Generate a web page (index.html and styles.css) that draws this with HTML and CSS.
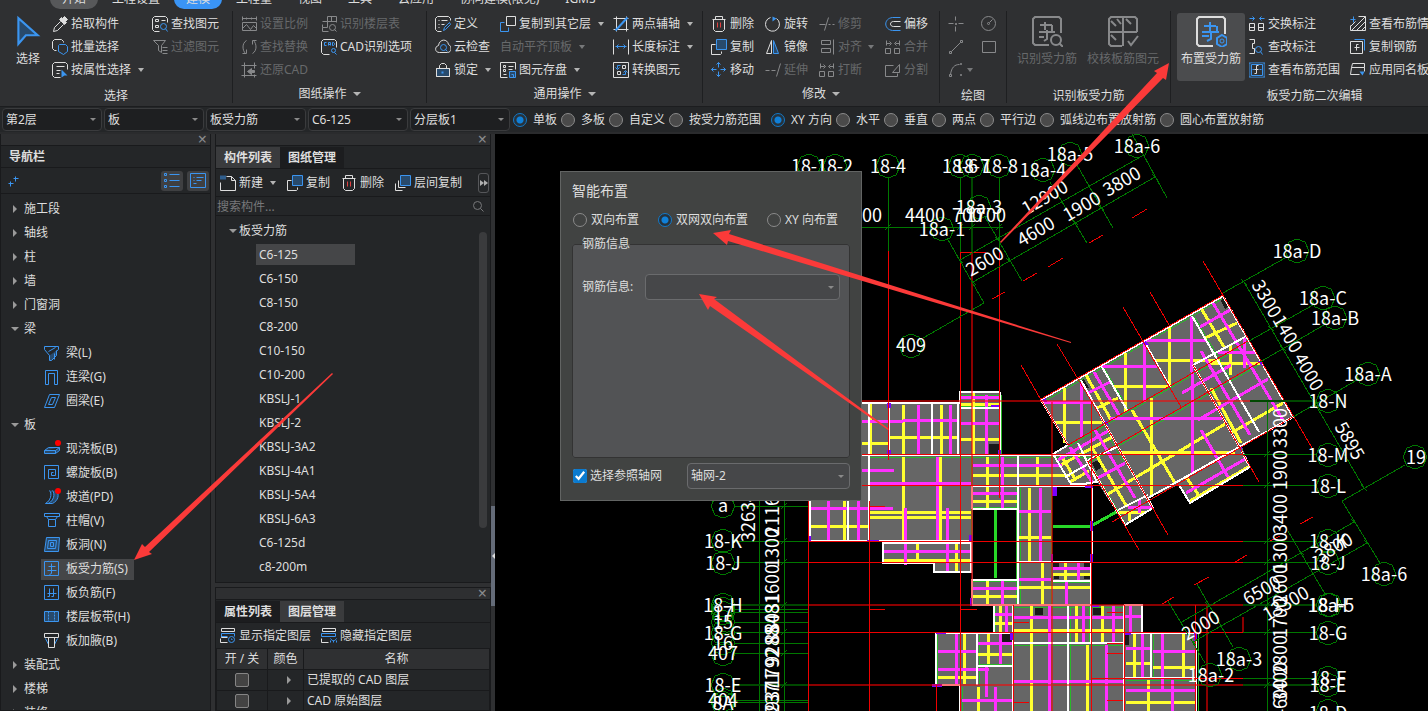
FILE: index.html
```html
<!DOCTYPE html>
<html lang="zh-CN">
<head>
    <meta charset="UTF-8">
    <title>板受力筋</title>
    <link rel="stylesheet" href="styles.css">
</head>
<body>
<!-- icon sprite -->
<svg class="sprite" aria-hidden="true">
    <symbol id="i-cursor" viewBox="0 0 24 30"><path class="b bf" d="M3 3V27L10 19H21Z" stroke-width="2"/></symbol>
    <symbol id="i-dropper" viewBox="-.5 -.5 16 16"><path class="f" d="M10 2l2-2 3 3-2 2 1 1-2 2-5-5 2-2z"/><path d="M8 5L2 11l-1 4 4-1 6-6"/></symbol>
    <symbol id="i-batch" viewBox="-.5 -.5 16 16"><path d="M4 11H2L0 9V2L2 0h7l2 2v1"/><path class="b" d="M7 5h6l2 2v5l-4 3-5-3V6z"/></symbol>
    <symbol id="i-attr" viewBox="-.5 -.5 16 16"><path d="M15 7V2L13 0H2L0 2v11l2 2h6M4 4h8M4 8h4M4 11h3"/><path class="bs" d="M9 7l6 6h-3l-3 2z"/></symbol>
    <symbol id="i-find" viewBox="-.5 -.5 16 16"><path d="M15 6V2L13 0H2L0 2v11l2 2h5M3 3h3v2H3zM3 9h3v2H3zM9 4h4"/><circle class="b" cx="11" cy="10" r="3"/><path class="b" d="M13 12l2 3"/></symbol>
    <symbol id="i-filter" viewBox="-.5 -.5 16 16"><path d="M1 1h12L9 6v7l-3-2V6zM10 8h5M10 11h5M10 14h5"/></symbol>
    <symbol id="i-scale" viewBox="-.5 -.5 16 16"><path d="M1 0v4M15 0v4M1 2h14M5 1v2M10 1v2M1 6h14v8H1zM1 12l4-4 4 5 3-4 3 3"/></symbol>
    <symbol id="i-swap" viewBox="-.5 -.5 16 16"><path d="M5 1C0 4 1 11 4 14M1 14h4v-4M11 14c5-3 4-10 1-13M15 1h-4v4"/></symbol>
    <symbol id="i-restore" viewBox="-.5 -.5 16 16"><path d="M3 0v15M13 0v6M0 3h15M0 13h15M13 12v3"/><path class="f" d="M6 9l4-3v2h3v2h-3v2z"/></symbol>
    <symbol id="i-floors" viewBox="-.5 -.5 16 16"><path d="M6 0h9v6M6 0v11H1v4M1 5h14M10 0v5M1 11V8M1 15h6"/><circle cx="11" cy="11" r="3"/><path d="M13 13l2 2"/></symbol>
    <symbol id="i-cad" viewBox="-.5 -.5 16 16"><path d="M15 8V2L13 0H2L0 2v11l2 2h6"/><path class="b" d="M5 3H3v3h2M7 6V3h2v3M7 5h2M11 3v3h1l1-1V4l-1-1z"/><circle class="b" cx="12" cy="11" r="2"/><path class="b" d="M13 13l2 2"/></symbol>
    <symbol id="i-define" viewBox="-.5 -.5 16 16"><path d="M15 4V2L13 0H2L0 2v11l2 2h4M3 4h1M6 4h6M3 8h1M6 8h3M3 11h1"/><path class="b" d="M8 14l1-3 5-5 1 2-5 5z"/></symbol>
    <symbol id="i-cloud" viewBox="-.5 -.5 16 16"><path d="M4 13C-1 13-1 7 3 6 4-1 12-1 13 5c4 2 3 8-1 8z"/><circle class="b" cx="8" cy="8" r="3"/><path class="b" d="M10 10l2 2"/></symbol>
    <symbol id="i-lock" viewBox="-.5 -.5 16 16"><path class="bf" d="M1 6h13v8H1z"/><path d="M1 6h13v8H1zM4 6V3l2-2h3l2 2v3"/><path class="b" d="M7 9v2" stroke-width="2"/></symbol>
    <symbol id="i-copy" viewBox="-.5 -.5 16 16"><path d="M4 5H0v10h9l1-1v-2"/><path class="b bf" d="M5 0h10v10H5z"/></symbol>
    <symbol id="i-copyto" viewBox="-.5 -.5 16 16"><path d="M6 0h9v9H6z"/><path class="b" d="M4 6H0v9h8v-4"/></symbol>
    <symbol id="i-save" viewBox="-.5 -.5 16 16"><path d="M15 7V0H0v15h7M3 3h2v2H3zM3 7h2v2H3zM3 12h3M8 4h5M8 7h4"/><path class="b bf" d="M9 9h6v6H9zM11 12h2v3"/></symbol>
    <symbol id="i-axis2" viewBox="-.5 -.5 16 16"><path d="M3 0v15M13 0v15M0 2h15M0 13h15"/><path class="b" d="M2 14L14 1" stroke-width="2"/></symbol>
    <symbol id="i-length" viewBox="-.5 -.5 16 16"><path d="M0 0v15M15 0v15"/><path class="b" d="M2 7h11M5 5L3 7l2 2M10 5l2 2-2 2"/></symbol>
    <symbol id="i-convert" viewBox="-.5 -.5 16 16"><path d="M0 0h15v15H0zM9 3h3v3H9zM4 9h3v3H4z"/><path class="b" d="M7 3H4v3M2 5l2 2 2-2M9 12h3V9M10 10l2-2 2 2"/></symbol>
    <symbol id="i-trash" viewBox="-.5 -.5 16 16"><path d="M1 3h13M4 3V0h7v3M2 3v10l2 2h7l2-2V3"/><path class="r" d="M6 6v5M9 6v5"/></symbol>
    <symbol id="i-rotate" viewBox="-.5 -.5 16 16"><path d="M11 2a7 7 0 1 1-6-1"/><path class="bs" d="M7 0l4 2-4 3z"/></symbol>
    <symbol id="i-trim" viewBox="-.5 -.5 16 16"><path d="M0 8h6M9 1L5 14M9 8h2M13 8h2"/></symbol>
    <symbol id="i-offset" viewBox="-.5 -.5 16 16"><path class="b" d="M15 1H7C-2 2-2 13 7 14h8"/><path d="M15 5H8c-4 0-4 5 0 5h7"/></symbol>
    <symbol id="i-mirror" viewBox="-.5 -.5 16 16"><path d="M6 1v13H1z"/><path class="b bf" d="M8 1v13h5z"/></symbol>
    <symbol id="i-align" viewBox="-.5 -.5 16 16"><path d="M2 1h9v4H2zM2 9h9v4H2zM14 0v15"/></symbol>
    <symbol id="i-merge" viewBox="-.5 -.5 16 16"><path d="M0 9h5v5H0zM9 9h5v5H9zM1 1v5M1 4h4M4 2l2 2-2 2M14 1v5M14 4h-4M11 2L9 4l2 2"/></symbol>
    <symbol id="i-move" viewBox="-.5 -.5 16 16"><path class="b" d="M7 0v5M7 9v5M0 7h5M9 7h5M5 2l2-2 2 2M5 12l2 2 2-2M2 5L0 7l2 2M12 5l2 2-2 2"/></symbol>
    <symbol id="i-extend" viewBox="-.5 -.5 16 16"><path d="M0 8h4M6 8h4M15 1l-4 13"/></symbol>
    <symbol id="i-split" viewBox="-.5 -.5 16 16"><path d="M8 3H0v11h12v-3M7 10l7-8v8z"/></symbol>
    <symbol id="i-point" viewBox="-.5 -.5 16 16"><path d="M7 0v4M7 10v5M0 7h5M10 7h5"/><path class="f" d="M7 7h1v1h-1z"/></symbol>
    <symbol id="i-circle" viewBox="-.5 -.5 16 16"><circle cx="7" cy="7" r="7"/><circle cx="7" cy="7" r="1"/><path d="M8 6l3-3"/></symbol>
    <symbol id="i-line" viewBox="-.5 -.5 16 16"><path d="M3 12L12 3M1 12h2v2H1zM12 1h2v2h-2z"/></symbol>
    <symbol id="i-rect" viewBox="-.5 -.5 16 16"><path d="M1 2h13v11H1z"/></symbol>
    <symbol id="i-arc" viewBox="-.5 -.5 16 16"><path d="M2 12C3 5 6 2 11 2M1 12h2v2H1zM12 12h1v1h-1zM12 1h1v1h-1z"/></symbol>
    <symbol id="i-bars-find" viewBox="0 0 32 32"><path stroke-width="2" d="M18 30H4l-2-2V4l2-2h24l2 2v14M9 10h12M14 7v8M8 17h16M21 10v8M16 15v9l-3 2M8 22h5"/><circle stroke-width="2" cx="25" cy="25" r="5"/><path stroke-width="2" d="M28 28l4 4"/></symbol>
    <symbol id="i-bars-check" viewBox="0 0 32 32"><path stroke-width="2" d="M15 31H4l-2-2V4l2-2h24l2 2v13M16 2v29M2 17h28M4 6l5 5M10 4l4 5M19 4l5 5M4 20l5 5M21 26l3 4 7-9"/></symbol>
    <symbol id="i-bars-set" viewBox="0 0 32 32"><path stroke-width="2" d="M18 31H4l-2-2V4l2-2h24l2 2v15"/><path class="b" stroke-width="2" d="M9 11h12M15 7v9M7 17h17M22 11v6M16 16v8l-4 2M7 21h7"/><circle class="b" cx="27" cy="26" r="2"/><path class="b" stroke-width="2" d="M27 20l5 3v6l-5 3-5-3v-6z"/></symbol>
    <symbol id="i-swapnote" viewBox="-.5 -.5 16 16"><path class="b" d="M0 2h5M3 0l2 2-2 2M15 2h-5M12 0l-2 2 2 2"/><path d="M0 7h5v7H0zM0 11h5M9 7h5v7H9zM9 11h5"/></symbol>
    <symbol id="i-editnote" viewBox="-.5 -.5 16 16"><path d="M0 0h5v4H3v5h2v5H0"/><circle class="b" cx="9" cy="10" r="3"/><path class="b" d="M11 12l2 3"/></symbol>
    <symbol id="i-range" viewBox="-.5 -.5 16 16"><path class="b" stroke-width="2" stroke-dasharray="1 1" d="M0 0h15v15H0z"/><path class="b" d="M2 2h11v11H2zM3 7h2M10 7h2"/><path d="M9 3H7v8H5M5 7h4"/></symbol>
    <symbol id="i-hatch" viewBox="-.5 -.5 16 16"><path d="M8 0h7v14H0V9M1 14L15 0M6 14l9-9M0 10l5-5M11 14l4-4"/><path class="b" d="M0 3h5M3 0v6"/></symbol>
    <symbol id="i-copybar" viewBox="-.5 -.5 16 16"><path d="M0 2h12v12H0zM4 8h5M8 5H6v6"/><path class="b" d="M4 0h10v11"/></symbol>
    <symbol id="i-apply" viewBox="-.5 -.5 16 16"><path d="M2 1h12v4H1zM1 5L0 12h9M14 5v4"/><path class="bs" d="M9 9h5l-2 4z"/></symbol>
    <symbol id="i-plus2" viewBox="-.5 -.5 16 16"><path class="b" d="M4 8v5M2 10h5M9 3v5M7 5h5"/></symbol>
    <symbol id="i-listview" viewBox="-.5 -.5 16 16"><path class="b" d="M0 0h2v2H0zM0 6h2v2H0zM0 12h2v2H0zM5 1h10M5 7h10M5 13h10"/></symbol>
    <symbol id="i-cardview" viewBox="-.5 -.5 16 16"><path class="b" d="M0 0h15v14H0zM3 4h1M6 4h7M3 7h1M6 7h5M3 10h3"/></symbol>
    <symbol id="i-beam" viewBox="-.5 -.5 16 16"><path class="b" d="M0 1h14v3L7 10H5L0 4z"/><path class="b bf" d="M5 10v5h2l5-5V5M4 6l7-4M10 14V8"/></symbol>
    <symbol id="i-link" viewBox="-.5 -.5 16 16"><path class="b" d="M1 15V1h12v14h-3V4H4v11z"/></symbol>
    <symbol id="i-ring" viewBox="-.5 -.5 16 16"><path class="b" d="M5 1h10l-5 13H0zM7 4h4l-3 7H4z"/></symbol>
    <symbol id="i-slab" viewBox="-.5 -.5 16 16"><path class="b bf" d="M0 9l4-3h11v3l-4 3H0zM0 9h11l4-3M11 9v3"/></symbol>
    <symbol id="i-spiral" viewBox="-.5 -.5 16 16"><path class="b" d="M0 14V0h14v13H4V4h7v6H7V7h2"/></symbol>
    <symbol id="i-ramp" viewBox="-.5 -.5 16 16"><path class="b bf" d="M5 1c3 4 1 10-4 13h7c6-3 7-9 4-13M8 1c3 4 1 10-4 13"/></symbol>
    <symbol id="i-cap" viewBox="-.5 -.5 16 16"><path class="b" d="M0 0h15v3H0zM2 3l2 3h7l2-3M4 6v7h7V6"/></symbol>
    <symbol id="i-hole" viewBox="-.5 -.5 16 16"><path class="b bf" d="M2 0h13l-1 14H0z"/><path class="b" d="M4 3h8l-1 8H3zM6 5h3v4H6z"/></symbol>
    <symbol id="i-rebar" viewBox="-.5 -.5 16 16"><path class="b" d="M0 0h14v14H0zM4 5h7M3 9h9M7 2v10l-2 1"/></symbol>
    <symbol id="i-negbar" viewBox="-.5 -.5 16 16"><path class="b" d="M0 0h14v14H0zM5 3v8H3M9 3v8h-2M3 8h9"/></symbol>
    <symbol id="i-strip" viewBox="-.5 -.5 16 16"><path class="b bf" d="M0 2h14v10H0z"/><path class="b" d="M4 2v10M10 2v10" stroke-dasharray="2 1"/></symbol>
    <symbol id="i-haunch" viewBox="-.5 -.5 16 16"><path class="b" d="M1 5l3 6M13 5l-3 6"/><path d="M0 0h14v4H0zM4 4v10h6V4"/></symbol>
    <symbol id="i-new" viewBox="-.5 -.5 16 16"><path d="M6 1h5l4 4v10H0V7M11 1v4h4"/><path class="b" stroke-dasharray="1 1" stroke-width="4" d="M0 2h5"/></symbol>
    <symbol id="i-layercopy" viewBox="-.5 -.5 16 16"><path d="M3 5v7h7M0 8v7h7"/><path class="b bf" d="M5 0h10v10H5z"/></symbol>
    <symbol id="i-layers-on" viewBox="-.5 -.5 16 16"><path d="M1 0h13v3H1zM7 9H1v-2M0 10v4h7"/><path class="b" d="M1 5h13v3M1 5v3h6"/><circle class="b" cx="11" cy="11" r="3"/><path class="b" d="M11 10v1h1"/></symbol>
    <symbol id="i-layers-off" viewBox="-.5 -.5 16 16"><path d="M1 0h13v3H1zM0 10v4h7"/><path class="b" d="M0 5h14v3H0zM9 10c2 3 4 3 6 0M9 14v-2M12 14v-2M15 14v-2"/></symbol>
    <symbol id="i-search" viewBox="-.5 -.5 16 16"><circle cx="7" cy="7" r="4"/><path d="M10 10l3 3"/></symbol>
</svg>

<header class="ribbon">
    <nav class="tabs">
        <a href="#" class="tab start">开始</a>
        <a href="#" class="tab">工程设置</a>
        <a href="#" class="tab active">建模</a>
        <a href="#" class="tab">工程量</a>
        <a href="#" class="tab">视图</a>
        <a href="#" class="tab">工具</a>
        <a href="#" class="tab">云应用</a>
        <a href="#" class="tab">协同建模(限免)</a>
        <a href="#" class="tab">IGMS</a>
    </nav>
    <div class="groups">
        <section class="group g-select">
            <div class="tools">
                <button class="big"><svg class="cursor"><use href="#i-cursor"/></svg>选择</button>
                <div class="col">
                    <button><svg><use href="#i-dropper"/></svg>拾取构件</button>
                    <button><svg><use href="#i-batch"/></svg>批量选择</button>
                    <button class="drop"><svg><use href="#i-attr"/></svg>按属性选择</button>
                </div>
                <div class="col">
                    <button><svg><use href="#i-find"/></svg>查找图元</button>
                    <button disabled><svg><use href="#i-filter"/></svg>过滤图元</button>
                </div>
            </div>
            <h2>选择</h2>
        </section>
        <section class="group g-drawing">
            <div class="tools">
                <div class="col">
                    <button disabled><svg><use href="#i-scale"/></svg>设置比例</button>
                    <button disabled><svg><use href="#i-swap"/></svg>查找替换</button>
                    <button disabled><svg><use href="#i-restore"/></svg>还原CAD</button>
                </div>
                <div class="col">
                    <button disabled><svg><use href="#i-floors"/></svg>识别楼层表</button>
                    <button><svg><use href="#i-cad"/></svg>CAD识别选项</button>
                </div>
            </div>
            <h2 class="drop">图纸操作</h2>
        </section>
        <section class="group g-common">
            <div class="tools">
                <div class="col">
                    <button><svg><use href="#i-define"/></svg>定义</button>
                    <button><svg><use href="#i-cloud"/></svg>云检查</button>
                    <button class="drop"><svg><use href="#i-lock"/></svg>锁定</button>
                </div>
                <div class="col">
                    <button class="drop"><svg><use href="#i-copyto"/></svg>复制到其它层</button>
                    <button class="drop" disabled>自动平齐顶板</button>
                    <button class="drop"><svg><use href="#i-save"/></svg>图元存盘</button>
                </div>
                <div class="col">
                    <button class="drop"><svg><use href="#i-axis2"/></svg>两点辅轴</button>
                    <button class="drop"><svg><use href="#i-length"/></svg>长度标注</button>
                    <button><svg><use href="#i-convert"/></svg>转换图元</button>
                </div>
            </div>
            <h2 class="drop">通用操作</h2>
        </section>
        <section class="group g-modify">
            <div class="tools">
                <div class="col">
                    <button><svg><use href="#i-trash"/></svg>删除</button>
                    <button><svg><use href="#i-copy"/></svg>复制</button>
                    <button><svg><use href="#i-move"/></svg>移动</button>
                </div>
                <div class="col">
                    <button><svg><use href="#i-rotate"/></svg>旋转</button>
                    <button><svg><use href="#i-mirror"/></svg>镜像</button>
                    <button disabled><svg><use href="#i-extend"/></svg>延伸</button>
                </div>
                <div class="col">
                    <button disabled><svg><use href="#i-trim"/></svg>修剪</button>
                    <button class="drop" disabled><svg><use href="#i-align"/></svg>对齐</button>
                    <button disabled><svg><use href="#i-merge"/></svg>打断</button>
                </div>
                <div class="col">
                    <button><svg><use href="#i-offset"/></svg>偏移</button>
                    <button disabled><svg><use href="#i-merge"/></svg>合并</button>
                    <button disabled><svg><use href="#i-split"/></svg>分割</button>
                </div>
            </div>
            <h2 class="drop">修改</h2>
        </section>
        <section class="group g-draw">
            <div class="tools">
                <div class="col">
                    <button disabled aria-label="点"><svg><use href="#i-point"/></svg></button>
                    <button disabled aria-label="直线"><svg><use href="#i-line"/></svg></button>
                    <button class="drop" disabled aria-label="弧"><svg><use href="#i-arc"/></svg></button>
                </div>
                <div class="col">
                    <button disabled aria-label="圆"><svg><use href="#i-circle"/></svg></button>
                    <button disabled aria-label="矩形"><svg><use href="#i-rect"/></svg></button>
                </div>
            </div>
            <h2>绘图</h2>
        </section>
        <section class="group g-recog">
            <div class="tools">
                <button class="big" disabled><svg><use href="#i-bars-find"/></svg>识别受力筋</button>
                <button class="big" disabled><svg><use href="#i-bars-check"/></svg>校核板筋图元</button>
            </div>
            <h2>识别板受力筋</h2>
        </section>
        <section class="group g-edit">
            <div class="tools">
                <button class="big on"><svg><use href="#i-bars-set"/></svg>布置受力筋</button>
                <div class="col">
                    <button><svg><use href="#i-swapnote"/></svg>交换标注</button>
                    <button><svg><use href="#i-editnote"/></svg>查改标注</button>
                    <button><svg><use href="#i-range"/></svg>查看布筋范围</button>
                </div>
                <div class="col">
                    <button><svg><use href="#i-hatch"/></svg>查看布筋情况</button>
                    <button><svg><use href="#i-copybar"/></svg>复制钢筋</button>
                    <button><svg><use href="#i-apply"/></svg>应用同名板</button>
                </div>
            </div>
            <h2>板受力筋二次编辑</h2>
        </section>
    </div>
</header>

<div class="options">
    <span class="combo"><select aria-label="楼层"><option>第2层</option></select></span>
    <span class="combo"><select aria-label="构件类别"><option>板</option></select></span>
    <span class="combo"><select aria-label="构件类型"><option>板受力筋</option></select></span>
    <span class="combo"><select aria-label="构件"><option>C6-125</option></select></span>
    <span class="combo"><select aria-label="分层"><option>分层板1</option></select></span>
    <div class="radios">
        <label><input type="radio" name="area" checked>单板</label>
        <label><input type="radio" name="area">多板</label>
        <label><input type="radio" name="area">自定义</label>
        <label><input type="radio" name="area">按受力筋范围</label>
    </div>
    <div class="radios">
        <label><input type="radio" name="dir" checked>XY 方向</label>
        <label><input type="radio" name="dir">水平</label>
        <label><input type="radio" name="dir">垂直</label>
        <label><input type="radio" name="dir">两点</label>
        <label><input type="radio" name="dir">平行边</label>
        <label><input type="radio" name="dir">弧线边布置放射筋</label>
        <label><input type="radio" name="dir">圆心布置放射筋</label>
    </div>
</div>

<main class="work">
    <aside class="panel nav">
        <div class="strip"><button aria-label="关闭">×</button></div>
        <h3>导航栏</h3>
        <div class="nav-tools">
            <button class="add" aria-label="添加"><svg><use href="#i-plus2"/></svg></button>
            <button class="view" aria-label="列表"><svg><use href="#i-listview"/></svg></button>
            <button class="view" aria-label="卡片"><svg><use href="#i-cardview"/></svg></button>
        </div>
        <ul class="tree">
            <li class="node">施工段</li>
            <li class="node">轴线</li>
            <li class="node">柱</li>
            <li class="node">墙</li>
            <li class="node">门窗洞</li>
            <li class="node open">梁</li>
            <li class="leaf"><a href="#"><svg><use href="#i-beam"/></svg>梁(L)</a></li>
            <li class="leaf"><a href="#"><svg><use href="#i-link"/></svg>连梁(G)</a></li>
            <li class="leaf"><a href="#"><svg><use href="#i-ring"/></svg>圈梁(E)</a></li>
            <li class="node open">板</li>
            <li class="leaf"><a href="#" class="fresh"><svg><use href="#i-slab"/></svg>现浇板(B)</a></li>
            <li class="leaf"><a href="#"><svg><use href="#i-spiral"/></svg>螺旋板(B)</a></li>
            <li class="leaf"><a href="#" class="fresh"><svg><use href="#i-ramp"/></svg>坡道(PD)</a></li>
            <li class="leaf"><a href="#"><svg><use href="#i-cap"/></svg>柱帽(V)</a></li>
            <li class="leaf"><a href="#"><svg><use href="#i-hole"/></svg>板洞(N)</a></li>
            <li class="leaf"><a href="#" class="selected"><svg><use href="#i-rebar"/></svg>板受力筋(S)</a></li>
            <li class="leaf"><a href="#"><svg><use href="#i-negbar"/></svg>板负筋(F)</a></li>
            <li class="leaf"><a href="#"><svg><use href="#i-strip"/></svg>楼层板带(H)</a></li>
            <li class="leaf"><a href="#"><svg><use href="#i-haunch"/></svg>板加腋(B)</a></li>
            <li class="node">装配式</li>
            <li class="node">楼梯</li>
            <li class="node">装修</li>
        </ul>
    </aside>

    <div class="dock">
        <section class="panel members">
            <div class="strip"><button aria-label="关闭">×</button></div>
            <div class="dock-tabs"><button class="current">构件列表</button><button>图纸管理</button></div>
            <div class="dock-tools">
                <button class="drop"><svg><use href="#i-new"/></svg>新建</button>
                <button><svg><use href="#i-copy"/></svg>复制</button>
                <button><svg><use href="#i-trash"/></svg>删除</button>
                <button><svg><use href="#i-layercopy"/></svg>层间复制</button>
                <button class="more" aria-label="更多"><i></i><i></i></button>
            </div>
            <div class="search"><input type="text" placeholder="搜索构件..." aria-label="搜索构件"><svg><use href="#i-search"/></svg></div>
            <div class="list-wrap">
                <ul class="list">
                    <li class="parent">板受力筋</li>
                    <li><span class="selected">C6-125</span></li>
                    <li><span>C6-150</span></li>
                    <li><span>C8-150</span></li>
                    <li><span>C8-200</span></li>
                    <li><span>C10-150</span></li>
                    <li><span>C10-200</span></li>
                    <li><span>KBSLJ-1</span></li>
                    <li><span>KBSLJ-2</span></li>
                    <li><span>KBSLJ-3A2</span></li>
                    <li><span>KBSLJ-4A1</span></li>
                    <li><span>KBSLJ-5A4</span></li>
                    <li><span>KBSLJ-6A3</span></li>
                    <li><span>C6-125d</span></li>
                    <li><span>c8-200m</span></li>
                </ul>
                <div class="scrollbar"></div>
            </div>
        </section>
        <section class="panel layers">
            <div class="strip"><button aria-label="关闭">×</button></div>
            <div class="dock-tabs"><button>属性列表</button><button class="current">图层管理</button></div>
            <div class="dock-tools">
                <button><svg><use href="#i-layers-on"/></svg>显示指定图层</button>
                <button><svg><use href="#i-layers-off"/></svg>隐藏指定图层</button>
            </div>
            <table>
                <thead><tr><th class="c-on">开 / 关</th><th class="c-color">颜色</th><th>名称</th></tr></thead>
                <tbody>
                    <tr><td><input type="checkbox" aria-label="已提取的 CAD 图层"></td><td><i class="tri"></i></td><td class="name">已提取的 CAD 图层</td></tr>
                    <tr><td><input type="checkbox" aria-label="CAD 原始图层"></td><td><i class="tri"></i></td><td class="name">CAD 原始图层</td></tr>
                </tbody>
            </table>
        </section>
    </div>
    <div class="splitter"><button aria-label="收起"></button></div>

    <div class="canvas">
        <svg class="plan">
            <defs>
                <marker id="bubble" markerUnits="userSpaceOnUse" markerWidth="28" markerHeight="28" refX="14" refY="14">
                    <path d="M14 2l8 3 4 9-4 9-8 3-8-3-4-9 4-9z" fill="none" stroke="#007800"/>
                </marker>
            </defs>
            <g transform="translate(-495 -134)">
                <!-- slabs -->
                <g class="slab">
                    <path d="M862 403H960V392H1000V455H1091V486H1052V562H1091V605H1142V633H1196V711H960V685H936V633H994V605H972V541H809V455H862Z"/>
                    <path d="M883 543H971V572H934V563H883Z"/>
                    <path d="M1041 400L1223 296 1293 417 1242 447 1250 467 1190 503 1179 485 1148 498 1153 508 1125 525 1097 482 1071 484 1053 454 1068 445Z"/>
                </g>
                <path class="void" d="M973 509H1017V580H973ZM1053 487H1091V562H1053Z"/>
                <path class="shaft" d="M989 444H999V454H989ZM1035 607H1043V615H1035ZM1093 607H1102V615H1093ZM1002 634H1012V642H1002ZM1125 634H1129V645H1125ZM1053 563H1059V567H1053ZM1084 563H1090V567H1084ZM1054 574H1059V579H1054ZM1084 574H1090V579H1084ZM1080 380l4-1 5 9-4 1ZM1220 299l3-1 5 9-3 2ZM1092 463l7-3 3 7-6 4Z"/>
                <!-- secondary edges -->
                <path class="edge" d="M932 405V454M957 405V454M961 395H1001V454M961 406H999M870 457H971V541M973 457H1017M1020 457H1090M1016 488V605M1020 488V604M973 507H1017M973 581H1017M1051 488V604M1090 564V604M1053 582H1090M995 606V632M1014 607H1123M1070 607V711M1089 607V642M1014 645H1123M937 635V684M979 635V684M979 664H1012M962 687V711M1153 634V677M1126 677H1196M1198 633V711M1126 680H1196M1043 402L1222 299M1068 447L1248 343M1087 464L1259 365M1104 368L1129 410M1194 316L1230 377M1089 462L1125 523M1105 430L1124 463"/>
                <path class="green-wall" d="M995 510V578M1053 526H1091L1118 511"/>
                <!-- distribution bars -->
                <path class="yellow" d="M870 403V455M903 405V454M941 405V454M862 443H888M890 437H957M973 393V455M961 404H999M961 439H999M903 457V541M940 457V541M870 512H971M870 517H971M811 526H868M844 501V541M973 475H1070M987 457V508M1037 457V486M973 501H1017M1029 488V562M1019 537H1051M1053 574H1091M1065 563V580M1042 563V604M1019 587H1090M987 581V605M973 596H1017M884 560H970M917 544V562M956 544V572M1000 606V632M995 623H1012M1031 606V711M1014 630H1123M1076 606V642M1102 606V642M1087 645V711M964 634V684M988 634V664M978 654H1012M938 677H976M978 687V711M1134 634V677M1183 634V677M1126 663H1151M1153 667H1195M1126 702H1195M1148 680V711"/>
                <path class="yellow" d="M1064 388V443M1055 422H1102M1125 353V412M1113 386H1168M1169 327V386M1155 360H1220M1151 398V497M1120 452H1235M1207 363H1260M1230 345V375M1132 410L1175 483M1086 375L1111 420M1097 408L1118 398M1201 308L1224 347M1205 338L1237 323M1211 388L1241 443M1108 494L1225 424M1231 433L1283 403M1091 446L1127 507M1061 455L1075 479M1061 465L1112 437M1186 477L1200 497M1190 501L1250 466M1119 512H1145M1129 512V521M1070 482L1089 471"/>
                <path class="magenta" d="M862 421H903M903 420H957M918 405V454M950 405V454M961 397H999M961 423H999M986 395V454M862 470H894M870 483H971M937 457V541M905 508V565M947 508V573M811 508H893M828 501V541M858 501V541M973 465H1062M1002 457V508M973 493H1017M1040 488V562M1019 511H1051M1053 568H1091M1078 563V580M1019 579H1051M1066 582V604M1002 581V605M973 588H1017M884 551H970M1006 606V632M995 614H1012M1014 617H1123M1125 616H1141M1049 606V711M1083 606V642M1113 606V642M1130 606V632M1106 645V711M1014 681H1123M956 634V684M1000 634V664M938 651H976M978 643H1012M938 669H989M986 667V697M995 687V711M962 700H1012M1142 634V677M1162 634V690M1126 648H1151M1153 651H1195M1126 690H1195M1172 680V711"/>
                <path class="magenta" d="M1042 402H1091M1081 382V437M1102 366H1157M1144 343V402M1145 340H1207M1191 317V372M1192 372V473M1110 418H1222M1218 352H1255M1244 338V368M1094 372L1119 415M1088 393L1110 382M1213 303L1283 420M1200 327L1230 310M1201 351L1250 435M1182 393L1231 365M1198 420L1268 379M1201 430L1228 477M1186 493L1247 458M1095 430L1135 498M1098 478L1125 463M1058 460L1108 431M1070 447L1092 482M1128 507H1152M1139 500V513"/>
                <!-- walls -->
                <path class="wall" d="M862 403H960V392H1000M869 403V541M889 403V455M932 403V455M958 403V455M1000 392V455M961 408H1000M862 455H972M810 501V541H972M848 501V541M883 543H971V572H934V563H883ZM972 486V509M972 579V605H1091M1018 455V605M972 509H1018M972 580H1018M972 455H1091M972 486H1053M1053 486H1092V562M1018 562H1091V605M1053 581H1091M994 605V632M1013 605V711M1068 605V711M1091 605V643M1013 643H1124M1124 605V711M1124 605H1142V633M936 685V633H1013M936 685H960V711M977 633V685M977 666H1012M1124 633H1196V711M1151 633V678M1124 678H1196"/>
                <path class="wall" d="M1068 445L1041 400 1223 296 1293 417 1148 498 1153 508 1125 525 1088 462M1068 445L1053 454 1071 484H1083L1097 482 1078 443M1102 367L1127 410M1081 380L1105 424 1152 507M1145 343L1170 387M1192 316L1228 378 1259 432M1193 365L1245 337M1193 365L1240 448M1065 477L1088 464M1088 460L1117 447M1118 510L1148 495M1179 485L1190 503 1250 467 1241 450"/>
                <path class="column" d="M887 403h4v5h-4zM887 450h4v5h-4zM991 405h9v2h-9zM998 450h3v5h-3zM809 536h2v6h-2zM867 540h12v2h-12zM969 535h3v7h-3zM1052 487h5v9h-5zM1085 486h8v2h-8zM1090 521h3v10h-3zM1051 554h2v8h-2zM1090 554h3v8h-3zM970 598h2v8h-2zM1091 605h8v2h-8zM936 632h10v2h-10zM932 684h10v3h-10zM1010 632h3v8h-3zM1194 633h3v8h-3zM1125 633h6v2h-6zM1041 401l5-3 1 4zM1141 344l5-3 3 4zM1103 422l4-1 2 5zM1258 361l4 1 1 5zM1238 446l4 1-1 5z"/>
                <!-- axes -->
                <path class="axis-dark" d="M862 401H1268M809 605H1243M809 685H1243M972 252V605M1052 401V711M1207 605V711M1243 617V633"/>
                <path class="axis" d="M888 251V460M960 252V711M999 252V498M1091 401V711M808 501V711M869 501V711M936 685V711M1013 605V711M1124 605V711M1195 605V711M862 454H1243M862 485H1243M809 541H1243M809 562H1243M809 632H1243M1091 678H1243M960 252H986M869 506H885M870 609H885M961 609H977M1013 622H1029M1107 612H1123M1107 643H1123M1107 653H1123M1013 702H1029M1107 700H1123"/>
                <path class="axis" d="M1021 365L1041 400 1068 445M1057 344L1105 424 1168 535M1123 307L1181 407M1150 292L1169 325M1203 261L1312 448M1193 365L1259 482M1088 462L1139 550M1041 399L1223 295M1112 522L1293 417M1068 445L1248 341M1087 462L1260 362M992 299l13-7M1023 281l14-8M1048 267l15-9M1089 243l14-8M1132 218l15-9M1162 604l12-7M1194 585l15-8M1235 562l12-7M1268 542l12-6M1300 524l13-7"/>
                <!-- dimension lines -->
                <path class="dim" d="M862 227H1003M888 178V251M960 178V252M972 178V252M999 178V252M960 260L1142 156M973 282L1155 177M947 238L984 303 923 338M985 217L1022 281M1050 182L1087 243M1077 165L1113 228M1132 134L1167 198M1223 293L1285 258M1244 282L1364 488M1249 341L1313 305M1260 362L1324 325M1293 417L1357 380M1405 465L1342 501 1380 563M1180 623L1354 522M1193 642L1367 543M1168 601L1205 663M1197 584L1233 647M1288 531L1325 594M1267 400V711M1243 454H1316M1243 485H1316M1243 541H1316M1243 562H1316M1243 632H1316M1243 678H1316M759 501V711M784 501V711M735 506H808M735 541H808M735 562H808M735 609H808M735 612H808M735 622H808M735 632H808M735 643H808M735 653H808M735 700H808M735 702H808"/>
                <path class="dim-dark" d="M1250 401H1316M1243 605H1316M1243 685H1316M735 605H808M735 685H808M972 178V252"/>
                <path class="dim" d="M885 230l6-6M957 230l6-6M969 230l6-6M996 230l6-6M957 257l6 6M970 279l6 6M995 237l6 5M1006 258l6 5M1072 220l6 5M1098 205l6 5M1152 174l6 6M1241 279l6 6M1268 326l6 5M1280 346l6 5M1310 397l6 6M1361 485l6 6M1264 457l6-6M1264 488l6-6M1264 544l6-6M1264 565l6-6M1264 608l6-6M1264 635l6-6M1264 688l6-6M781 509l6-6M781 544l6-6M781 565l6-6M781 608l6-6M781 635l6-6M781 656l6-6M781 688l6-6M1351 519l6 6M1364 540l6 6M1205 602l6 6M1298 549l6 6M1190 639l6 6"/>
                <polyline class="bubbles" points="809,166 835,166 888,166 960,166 972,166 999,166 1043,170 1070,154 1137,146 979,207 942,229 911,346 1297,251 1323,298 1335,318 1368,374 1328,401 1328,455 1328,486 1415,457 1328,541 1328,563 1328,605 1330,605 1328,633 1328,678 1328,685 1328,711 1384,574 1239,659 1210,675 723,506 723,541 723,563 723,605 723,609 723,613 723,622 723,633 723,643 723,654 723,685 723,700 723,703"/>
                <g class="labels">
                    <text x="809" y="173">18-1</text><text x="835" y="173">18-2</text><text x="888" y="173">18-4</text>
                    <text x="960" y="173">18-6</text><text x="972" y="173">18-7</text><text x="1000" y="173">18-8</text>
                    <text x="1043" y="177">18a-4</text><text x="1070" y="161">18a-5</text><text x="1137" y="153">18a-6</text>
                    <text x="979" y="214">18a-3</text><text x="942" y="236">18a-1</text><text x="911" y="352">409</text>
                    <text x="862" y="222">4800</text><text x="925" y="222">4400</text><text x="967" y="222">700</text><text x="986" y="222">1700</text>
                    <text x="1297" y="258">18a-D</text><text x="1323" y="305">18a-C</text><text x="1335" y="325">18a-B</text><text x="1368" y="381">18a-A</text>
                    <text x="1328" y="408">18-N</text><text x="1328" y="462">18-M</text><text x="1328" y="493">18-L</text><text x="1416" y="464">19</text>
                    <text x="1328" y="548">18-K</text><text x="1328" y="570">18-J</text><text x="1328" y="612">18-H</text><text x="1331" y="612">18a-5</text>
                    <text x="1328" y="640">18-G</text><text x="1328" y="685">18-F</text><text x="1328" y="692">18-E</text><text x="1328" y="720">18-D</text>
                    <text x="1384" y="581">18a-6</text><text x="1239" y="666">18a-3</text><text x="1211" y="682">18a-2</text>
                    <text x="723" y="512">a</text><text x="723" y="548">18-K</text><text x="723" y="570">18-J</text><text x="723" y="612">18-H</text>
                    <text x="723" y="620">17</text><text x="723" y="629">15</text><text x="723" y="640">18-G</text><text x="723" y="650">16</text>
                    <text x="723" y="660">407</text><text x="723" y="692">18-E</text><text x="723" y="707">404</text><text x="723" y="710">8A</text>
                    <text transform="translate(1048 203) rotate(-30)">12900</text>
                    <text transform="translate(1039 237) rotate(-30)">4600</text>
                    <text transform="translate(1085 212) rotate(-30)">1900</text>
                    <text transform="translate(1125 187) rotate(-30)">3800</text>
                    <text transform="translate(988 267) rotate(-30)">2600</text>
                    <text transform="translate(1265 596) rotate(-30)">6500</text>
                    <text transform="translate(1289 609) rotate(-30)">13300</text>
                    <text transform="translate(1204 631) rotate(-30)">2000</text>
                    <text transform="translate(1337 553) rotate(-30)">3800</text>
                    <text transform="translate(1261 302) rotate(60)">3300</text>
                    <text transform="translate(1282 337) rotate(60)">1400</text>
                    <text transform="translate(1303 375) rotate(60)">4000</text>
                    <text transform="translate(1344 444) rotate(60)">5895</text>
                    <text transform="translate(1287 428) rotate(-90)">3300</text>
                    <text transform="translate(1287 470) rotate(-90)">1900</text>
                    <text transform="translate(1287 514) rotate(-90)">3400</text>
                    <text transform="translate(1287 552) rotate(-90)">1300</text>
                    <text transform="translate(1287 584) rotate(-90)">2600</text>
                    <text transform="translate(1287 618) rotate(-90)">1700</text>
                    <text transform="translate(1287 655) rotate(-90)">2800</text>
                    <text transform="translate(1287 682) rotate(-90)">3400</text>
                    <text transform="translate(1287 699) rotate(-90)">4600</text>
                    <text transform="translate(755 517) rotate(-90)">32634</text>
                    <text transform="translate(779 516) rotate(-90)">2116</text>
                    <text transform="translate(779 548) rotate(-90)">1300</text>
                    <text transform="translate(779 584) rotate(-90)">1600</text>
                    <text transform="translate(779 613) rotate(-90)">8031</text>
                    <text transform="translate(779 624) rotate(-90)">8548</text>
                    <text transform="translate(779 646) rotate(-90)">9288</text>
                    <text transform="translate(779 668) rotate(-90)">1792</text>
                    <text transform="translate(779 691) rotate(-90)">9371</text>
                    <text transform="translate(779 704) rotate(-90)">8237</text>
                </g>
            </g>
        </svg>

        <form class="dialog">
            <h3>智能布置</h3>
            <div class="modes">
                <label><input type="radio" name="mode">双向布置</label>
                <label><input type="radio" name="mode" checked>双网双向布置</label>
                <label><input type="radio" name="mode">XY 向布置</label>
            </div>
            <fieldset>
                <legend>钢筋信息</legend>
                <div class="field">
                    <label for="rebar">钢筋信息:</label>
                    <span class="combo"><select id="rebar"><option></option></select></span>
                </div>
            </fieldset>
            <div class="grid-ref">
                <label><input type="checkbox" checked>选择参照轴网</label>
                <span class="combo"><select aria-label="轴网"><option>轴网-2</option></select></span>
            </div>
        </form>
    </div>
</main>

<!-- guide arrows over the whole window -->
<svg class="arrows" aria-hidden="true">
    <path d="M1000 242L1157 73 1154 71 1169 63 1166 80 1163 78 1001 243Z"/>
    <path d="M1071 342L729 234 731 230 713 233 727 245 728 241 1071 343Z"/>
    <path d="M889 429L714 299 717 297 699 294 708 310 710 306 888 430Z"/>
    <path d="M332 373L145 547 142 544 134 560 152 554 149 552 333 374Z"/>
</svg>
</body>
</html>
```
FILE: styles.css
```css
* {
    box-sizing: border-box;
}
body {
    display: flex;
    flex-direction: column;
    height: 100vh;
    margin: 0;
    overflow: hidden;
    background-color: #2f3032;
    color: #dedede;
    font-family: "Noto Sans", "Noto Sans CJK SC", sans-serif;
    font-size: 12px;
    line-height: 16px;
}
button, select, input {
    font: inherit;
    color: inherit;
}
button {
    padding: 0;
    border: none;
    background: none;
    white-space: nowrap;
}
a {
    color: inherit;
    text-decoration: none;
}
h2, h3, ul {
    margin: 0;
    padding: 0;
    font-size: 12px;
    list-style: none;
}

/* icons */
.sprite {
    position: absolute;
    width: 0;
    height: 0;
}
button svg, .leaf svg, .search svg {
    width: 16px;
    height: 16px;
    flex: none;
    fill: none;
    stroke: currentColor;
}
.b { stroke: #3b95f0; }
.bf { fill: #284a6c; }
.bs { fill: #3b95f0; stroke: none; }
.f { fill: currentColor; }
.r { stroke: #e04040; }
button:disabled .b { stroke: currentColor; }

/* ribbon */
.ribbon {
    flex: none;
    height: 107px;
    overflow: hidden;
    border-bottom: 1px solid #1c1d1f;
}
.tabs {
    display: flex;
    align-items: flex-end;
    gap: 2px;
    height: 9px;
    padding-left: 50px;
}
.tab {
    height: 20px;
    padding: 0 12px;
    line-height: 20px;
    border-radius: 10px;
    white-space: nowrap;
}
.tab.start { background-color: #57585a; }
.tab.active { background-color: #3a94f5; }
.groups {
    display: flex;
}
.group {
    flex: none;
    height: 92px;
    margin-top: 2px;
    border-right: 1px solid #1e1f21;
}
.g-select { width: 233px; }
.g-drawing { width: 194px; }
.g-common { width: 276px; }
.g-modify { width: 237px; }
.g-draw { width: 67px; }
.g-recog { width: 164px; }
.g-edit { width: 288px; }
.tools {
    display: flex;
    gap: 9px;
    height: 72px;
    padding: 1px 8px 0;
}
.g-select .tools { gap: 8px; padding-left: 7px; }
.g-drawing .tools { gap: 13px; }
.g-modify .tools { gap: 11px; }
.g-draw .tools { gap: 3px; }
.g-recog .tools { gap: 10px; padding-left: 10px; }
.g-edit .tools { gap: 4px; padding-left: 6px; }
.col button {
    display: flex;
    align-items: center;
    gap: 3px;
    height: 23px;
}
.g-edit .col + .col { padding-left: 6px; }
.g-draw .col { min-width: 30px; }
.group button:disabled { color: #67696b; }
.group button:disabled svg { color: #88898b; }
.big {
    display: flex;
    flex-direction: column;
    align-items: center;
    gap: 4px;
    height: 68px;
    padding-top: 3px;
}
.big svg {
    width: 32px;
    height: 32px;
}
.g-select .big {
    width: 42px;
    margin-right: -5px;
}
.big.on {
    width: 68px;
    margin-top: 1px;
    padding-top: 2px;
    border-radius: 3px;
    background-color: #4b4c4e;
}
.group h2 {
    display: flex;
    align-items: center;
    justify-content: center;
    height: 22px;
    padding-top: 3px;
    font-weight: normal;
}
.group h2.drop { padding-top: 0; }
.drop::after {
    content: "";
    margin-left: 4px;
    border: 3px solid transparent;
    border-top: 4px solid #b5b5b5;
    border-bottom: none;
}
.g-modify .drop::after { margin-left: 3px; }
.drop:disabled::after { border-top-color: #77787a; }
.group h2.drop::after {
    border-width: 4px 4px 0;
    margin-left: 6px;
}
.g-draw .drop::after { margin-left: 0; }

/* option bar */
.options {
    display: flex;
    align-items: center;
    gap: 2px;
    flex: none;
    height: 27px;
    padding: 0 2px;
    background-color: #242628;
    border-bottom: 2px solid #2a2b2d;
}
.combo {
    position: relative;
    flex: none;
    display: block;
    width: 100px;
    height: 23px;
}
.combo::after {
    content: "";
    position: absolute;
    right: 6px;
    top: 10px;
    border: 3px solid transparent;
    border-top: 3px solid #8a8a8a;
    border-bottom: none;
}
.combo select {
    appearance: none;
    width: 100%;
    height: 100%;
    padding: 0 3px;
    border: 1px solid #3a3b3d;
    border-radius: 4px;
    background-color: #1e1f21;
}
.radios {
    display: flex;
    gap: 4px;
    padding: 0 7px 0 1px;
    white-space: nowrap;
}
.radios label, .modes label, .grid-ref label {
    display: flex;
    align-items: center;
}
input[type="radio"] {
    appearance: none;
    width: 14px;
    height: 14px;
    margin: 0 6px 0 0;
    border: 1px solid #8a8a8a;
    border-radius: 50%;
    background-color: #4a4a4a;
}
input[type="radio"]:checked {
    border-color: #1279c8;
    background: radial-gradient(circle, #1080d8 3px, #26323c 4px);
}

/* docked panels */
.work {
    display: flex;
    flex: 1;
    min-height: 0;
}
.panel {
    background-color: #242628;
    border: 1px solid #191a1c;
    border-top: none;
    overflow: hidden;
}
.strip {
    display: flex;
    justify-content: flex-end;
    flex: none;
    height: 12px;
    padding-right: 3px;
    background-color: #2e2f31;
    border-bottom: 1px solid #191a1c;
}
.strip button {
    color: #8a8b8d;
    font-size: 16px;
    line-height: 11px;
}
.nav {
    flex: none;
    width: 211px;
    margin-right: 4px;
}
.nav h3 {
    height: 22px;
    padding-left: 8px;
    line-height: 21px;
    border-bottom: 1px solid #191a1c;
}
.nav-tools {
    display: flex;
    align-items: center;
    gap: 4px;
    height: 26px;
    padding: 0 1px 0 5px;
    border-bottom: 1px solid #191a1c;
}
.nav-tools .add { margin-right: auto; }
.nav-tools button { height: 20px; }
.nav-tools svg { margin-top: 2px; }
.nav-tools .view {
    width: 22px;
    border-radius: 3px;
    background-color: #3f4042;
}
.tree { padding-top: 3px; }
.tree li {
    display: flex;
    align-items: center;
    height: 24px;
}
.node { padding-left: 12px; }
.node::before, .tri {
    content: "";
    width: 0;
    margin-right: 7px;
    border: 4px solid transparent;
    border-left: 4px solid #9a9a9a;
    border-right: none;
}
.node.open::before, .parent::before {
    content: "";
    margin: 0 5px 0 -2px;
    border: 4px solid transparent;
    border-top: 4px solid #9a9a9a;
    border-bottom: none;
}
.leaf { padding-left: 40px; }
.leaf a {
    position: relative;
    display: flex;
    align-items: center;
    gap: 6px;
    height: 21px;
    padding: 0 6px 0 3px;
}
.selected { background-color: #454648; }
.fresh::after {
    content: "";
    position: absolute;
    left: 14px;
    top: 1px;
    width: 6px;
    height: 6px;
    border-radius: 50%;
    background-color: #f00;
}
.dock {
    display: flex;
    flex-direction: column;
    gap: 4px;
    flex: none;
    width: 276px;
}
.members {
    display: flex;
    flex-direction: column;
    flex: 1;
    min-height: 0;
}
.layers {
    flex: none;
    height: 124px;
    border-top: 1px solid #191a1c;
}
.dock-tabs {
    display: flex;
    flex: none;
    height: 23px;
    border-bottom: 1px solid #191a1c;
}
.dock-tabs button {
    width: 64px;
    margin-top: 1px;
    background-color: #1c1d1f;
    font-weight: bold;
}
.dock-tabs .current { background-color: #3a3b3d; }
.dock-tools {
    display: flex;
    align-items: center;
    gap: 11px;
    flex: none;
    height: 27px;
    padding-left: 4px;
}
.dock-tools button {
    display: flex;
    align-items: center;
    gap: 3px;
}
.dock-tools .more {
    justify-content: center;
    gap: 0;
    width: 11px;
    height: 20px;
    margin: 0 1px 0 auto;
    border: 1px solid #56575a;
    border-radius: 3px;
}
.more i {
    border: 3px solid transparent;
    border-left: 4px solid #b0b0b0;
    border-right: none;
}
.search {
    display: flex;
    align-items: center;
    flex: none;
    height: 20px;
    padding-right: 4px;
    border-top: 1px solid #191a1c;
    border-bottom: 1px solid #191a1c;
    color: #77787a;
}
.search input {
    flex: 1;
    min-width: 0;
    height: 18px;
    padding: 0 1px;
    border: none;
    background: none;
}
.search input::placeholder { color: #77787a; }
.list-wrap {
    display: flex;
    flex: 1;
    min-height: 0;
    padding-top: 3px;
}
.list { flex: 1; }
.list li {
    display: flex;
    align-items: center;
    height: 24px;
    padding-left: 40px;
}
.list .parent {
    height: 23px;
    padding-left: 15px;
}
.list .parent::before { margin-right: 2px; }
.list span {
    width: 99px;
    height: 21px;
    padding-left: 3px;
    line-height: 21px;
}
.scrollbar {
    width: 8px;
    margin: 13px 3px 54px 0;
    border-radius: 4px;
    background-color: #3a3b3d;
}
.layers .dock-tools {
    gap: 10px;
    height: 25px;
}
table {
    width: 100%;
    table-layout: fixed;
    border-collapse: collapse;
}
th, td {
    height: 21px;
    padding: 0;
    border: 1px solid #191a1c;
    font-weight: normal;
    text-align: center;
}
th { background-color: #2f3032; }
.c-on { width: 51px; }
.c-color { width: 36px; }
td.name {
    padding-left: 3px;
    text-align: left;
}
td input {
    appearance: none;
    display: block;
    width: 14px;
    height: 14px;
    margin: 0 auto;
    border: 1px solid #858585;
    border-radius: 2px;
    background-color: #434343;
}
td .tri {
    display: inline-block;
    margin: 0 0 0 6px;
}
.splitter {
    display: flex;
    align-items: center;
    flex: none;
    width: 4px;
    padding-top: 267px;
}
.splitter button {
    width: 4px;
    height: 100px;
    background-color: #646b78;
}
.splitter button::after {
    content: "";
    display: block;
    border: 3px solid transparent;
    border-left: none;
    border-right: 3px solid #ddd;
}

/* drawing */
.canvas {
    position: relative;
    flex: 1;
    min-width: 0;
    overflow: hidden;
    background-color: #000;
}
.plan {
    display: block;
    width: 100%;
    height: 100%;
    fill: none;
    shape-rendering: crispEdges;
}
.slab { fill: #666; }
.void { fill: #000; }
.shaft { fill: #1a1a1a; }
.edge { stroke: #28b828; }
.green-wall { stroke: #28d828; stroke-width: 3px; }
.yellow { stroke: #ffff30; stroke-width: 3px; }
.magenta { stroke: #ff30ff; stroke-width: 3px; }
.wall { stroke: #fff; stroke-width: 2px; }
.column { fill: #7a00ff; }
.axis { stroke: #f00000; }
.axis-dark { stroke: #ff0000; stroke-width: 2px; stroke-opacity: 0.55; }
.dim { stroke: #007800; }
.dim-dark { stroke: #004800; stroke-width: 2px; }
.bubbles {
    marker-start: url(#bubble);
    marker-mid: url(#bubble);
    marker-end: url(#bubble);
}
.labels {
    fill: #fff;
    font-family: "Noto Sans CJK SC", sans-serif;
    font-size: 18px;
    text-anchor: middle;
}

/* floating dialog */
.dialog {
    position: absolute;
    left: 65px;
    top: 37px;
    width: 302px;
    padding: 10px 11px 11px;
    border: 1px solid #626463;
    background-color: #414342;
}
.dialog h3 {
    font-size: 14px;
    font-weight: normal;
    line-height: 18px;
}
.modes {
    display: flex;
    gap: 19px;
    height: 20px;
    margin: 10px 0 6px;
    padding-left: 1px;
    white-space: nowrap;
}
.modes input[type="radio"] {
    margin-right: 4px;
    background-color: transparent;
}
.dialog fieldset {
    height: 222px;
    margin: 0;
    padding: 0 9px;
    border: 1px solid #333;
    border-radius: 3px;
    background-color: #525355;
}
.dialog legend { padding: 0; }
.field {
    display: flex;
    align-items: center;
    gap: 12px;
    margin-top: 22px;
}
.dialog .combo {
    flex: 1;
    height: 26px;
}
.dialog .combo::after { top: 12px; }
.dialog select {
    border-color: #6a6b6d;
    background-color: #464749;
}
.grid-ref {
    display: flex;
    align-items: center;
    gap: 25px;
    margin-top: 5px;
}
.grid-ref input {
    width: 14px;
    height: 14px;
    margin: 0 3px 0 1px;
    accent-color: #0b7bd0;
}

.arrows {
    position: absolute;
    left: 0;
    top: 0;
    width: 100%;
    height: 100%;
    fill: #fb3a39;
    pointer-events: none;
}
```
